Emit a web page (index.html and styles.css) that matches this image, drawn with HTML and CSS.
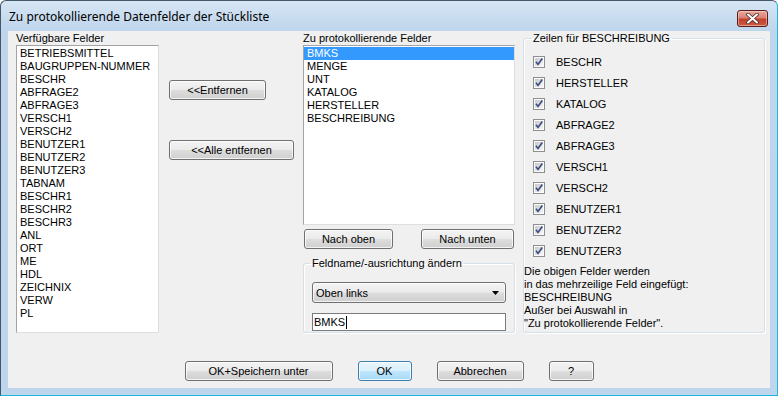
FILE: index.html
```html
<!DOCTYPE html>
<html lang="de">
<head>
  <meta charset="UTF-8" />
  <meta name="viewport" content="width=device-width, initial-scale=1.0"/>
  <title>Zu protokollierende Datenfelder der Stückliste</title>
  <link rel="stylesheet" href="styles.css">
</head>
<body>
  <svg class="defs" width="0" height="0" aria-hidden="true">
    <defs>
      <linearGradient id="chkFill" x1="0" y1="0" x2="1" y2="1">
        <stop offset="0" stop-color="#c9c9c9"/>
        <stop offset="1" stop-color="#f7f7f7"/>
      </linearGradient>
      <symbol id="chk" viewBox="0 0 12 12">
        <rect x="0.5" y="0.5" width="11" height="11" fill="#fbfbfb" stroke="#8e8f8f"/>
        <rect x="2" y="2" width="8" height="8" fill="url(#chkFill)"/>
        <path d="M3 5.8 L5 8.4 L9.3 2.6" fill="none" stroke="#3a4d83" stroke-width="1.7"/>
      </symbol>
    </defs>
  </svg>

  <div class="window">
    <div class="titlebar">
      <span class="title">Zu protokollierende Datenfelder der Stückliste</span>
      <button class="close" title="Schließen">
        <svg width="13" height="11" viewBox="0 0 13 11">
          <path d="M2 1.5 L11 9.5 M11 1.5 L2 9.5" stroke="#4a2a28" stroke-width="3.6" stroke-linecap="round"/>
          <path d="M2 1.5 L11 9.5 M11 1.5 L2 9.5" stroke="#fff" stroke-width="2" stroke-linecap="round"/>
        </svg>
      </button>
    </div>

    <div class="client">
      <div class="panes">
        <div class="col-left">
          <div class="label">Verfügbare Felder</div>
          <ul class="listbox list-avail">
            <li>BETRIEBSMITTEL</li>
            <li>BAUGRUPPEN-NUMMER</li>
            <li>BESCHR</li>
            <li>ABFRAGE2</li>
            <li>ABFRAGE3</li>
            <li>VERSCH1</li>
            <li>VERSCH2</li>
            <li>BENUTZER1</li>
            <li>BENUTZER2</li>
            <li>BENUTZER3</li>
            <li>TABNAM</li>
            <li>BESCHR1</li>
            <li>BESCHR2</li>
            <li>BESCHR3</li>
            <li>ANL</li>
            <li>ORT</li>
            <li>ME</li>
            <li>HDL</li>
            <li>ZEICHNIX</li>
            <li>VERW</li>
            <li>PL</li>
          </ul>
        </div>

        <div class="col-actions">
          <button class="btn btn-remove">&lt;&lt;Entfernen</button>
          <button class="btn btn-remove-all">&lt;&lt;Alle entfernen</button>
        </div>

        <div class="col-mid">
          <div class="label">Zu protokollierende Felder</div>
          <ul class="listbox list-log">
            <li class="selected">BMKS</li>
            <li>MENGE</li>
            <li>UNT</li>
            <li>KATALOG</li>
            <li>HERSTELLER</li>
            <li>BESCHREIBUNG</li>
          </ul>
          <div class="move-row">
            <button class="btn btn-up">Nach oben</button>
            <button class="btn btn-down">Nach unten</button>
          </div>
          <fieldset class="group group-field">
            <legend>Feldname/-ausrichtung ändern</legend>
            <div class="combo">
              <span>Oben links</span>
              <svg class="combo-arrow" width="7" height="4" viewBox="0 0 7 4"><path d="M0 0 H7 L3.5 4 Z" fill="#000"/></svg>
            </div>
            <div class="textbox">BMKS<span class="caret"></span></div>
          </fieldset>
        </div>

        <fieldset class="group group-lines">
          <legend>Zeilen für BESCHREIBUNG</legend>
          <label class="check-row"><svg class="chk"><use href="#chk"/></svg>BESCHR</label>
          <label class="check-row"><svg class="chk"><use href="#chk"/></svg>HERSTELLER</label>
          <label class="check-row"><svg class="chk"><use href="#chk"/></svg>KATALOG</label>
          <label class="check-row"><svg class="chk"><use href="#chk"/></svg>ABFRAGE2</label>
          <label class="check-row"><svg class="chk"><use href="#chk"/></svg>ABFRAGE3</label>
          <label class="check-row"><svg class="chk"><use href="#chk"/></svg>VERSCH1</label>
          <label class="check-row"><svg class="chk"><use href="#chk"/></svg>VERSCH2</label>
          <label class="check-row"><svg class="chk"><use href="#chk"/></svg>BENUTZER1</label>
          <label class="check-row"><svg class="chk"><use href="#chk"/></svg>BENUTZER2</label>
          <label class="check-row"><svg class="chk"><use href="#chk"/></svg>BENUTZER3</label>
          <p class="note">
            Die obigen Felder werden<br>
            in das mehrzeilige Feld eingefügt:<br>
            BESCHREIBUNG<br>
            Außer bei Auswahl in<br>
            "Zu protokollierende Felder".
          </p>
        </fieldset>
      </div>

      <div class="footer">
        <button class="btn btn-save">OK+Speichern unter</button>
        <button class="btn btn-default btn-ok">OK</button>
        <button class="btn btn-cancel">Abbrechen</button>
        <button class="btn btn-help">?</button>
      </div>
    </div>
  </div>
</body>
</html>
```

FILE: styles.css
```css
* {
  box-sizing: border-box;
}

body {
  margin: 0;
  font-family: "Liberation Sans", Arial, sans-serif;
  font-size: 11px;
  color: #000;
  background: #fff;
}

.defs {
  position: absolute;
  width: 0;
  height: 0;
}

/* window frame */
.window {
  width: 778px;
  height: 396px;
  display: flex;
  flex-direction: column;
  border: 1px solid #44566b;
  border-right-color: #1db7dc;
  border-bottom-color: #1db7dc;
  border-radius: 6px 6px 0 0;
  background: linear-gradient(#d6e5f4, #bed5ec 30px, #bdd5ed);
}

.titlebar {
  height: 30px;
  flex-shrink: 0;
  display: flex;
  justify-content: space-between;
  align-items: flex-start;
  padding: 0 9px 0 8px;
}

.title {
  font-family: "Noto Sans", sans-serif;
  font-size: 12px;
  line-height: 16px;
  margin-top: 8px;
}

.close {
  width: 31px;
  height: 17px;
  margin-top: 9px;
  padding: 0;
  display: flex;
  align-items: center;
  justify-content: center;
  border: 1px solid #5a1d1a;
  border-radius: 3px;
  background: linear-gradient(#e7a99c, #d98274 45%, #c0412d 55%, #cd5a45);
  box-shadow: inset 0 0 0 1px rgba(255, 220, 210, 0.5);
}

.client {
  margin: 0 7px;
  height: 357px;
  background: #f0f0f0;
  padding: 1px 0 0 8px;
}

.panes {
  display: flex;
  align-items: flex-start;
}

.label {
  line-height: 13px;
  height: 13px;
}

/* list boxes */
.listbox {
  list-style: none;
  margin: 0;
  padding: 1px 0 0;
  background: #fff;
  border: 1px solid;
  border-color: #a3a3a3 #dedede #dedede #a3a3a3;
  overflow: hidden;
}

.listbox li {
  line-height: 13px;
  padding-left: 3px;
  white-space: nowrap;
}

.listbox li.selected {
  background: #3399ff;
  color: #fff;
}

.col-left {
  width: 143px;
}

.list-avail {
  height: 288px;
}

.col-actions {
  width: 126px;
  margin-left: 10px;
  padding-top: 48px;
  display: flex;
  flex-direction: column;
  align-items: flex-start;
  gap: 40px;
}

.col-mid {
  width: 212px;
  margin-left: 8px;
}

.list-log {
  height: 180px;
}

.move-row {
  display: flex;
  justify-content: space-between;
  padding: 0 1px 0 1px;
  margin: 4px 0 8px;
}

/* buttons */
.btn {
  height: 20px;
  padding: 0;
  font: inherit;
  color: #000;
  border: 1px solid #707070;
  border-radius: 3px;
  background: linear-gradient(#f3f3f3, #ebebeb 48%, #dddddd 52%, #cfcfcf);
  box-shadow: inset 0 0 0 1px rgba(255, 255, 255, 0.75);
}

.btn-default {
  border-color: #3c7fb1;
  background: linear-gradient(#e9f6fd, #d9f0fc 48%, #bee6fd 52%, #a7d9f5);
}

.btn-remove { width: 97px; }
.btn-remove-all { width: 125px; }
.btn-up { width: 89px; }
.btn-down { width: 93px; }
.btn-save { width: 148px; }
.btn-ok { width: 54px; }
.btn-cancel { width: 87px; }
.btn-help { width: 45px; }

/* group boxes */
.group {
  margin: 0;
  padding: 0;
  border: 1px solid #d5dfe5;
  border-radius: 3px;
  box-shadow: inset 1px 1px 0 #fff, 1px 1px 0 #fff;
}

.group legend {
  padding: 0 2px;
  line-height: 13px;
}

.group-field {
  height: 76px;
  padding: 12px 8px 0 8px;
}

.group-field legend {
  margin-left: -2px;
}

.combo {
  height: 21px;
  display: flex;
  align-items: center;
  justify-content: space-between;
  padding: 0 6px 0 3px;
  border: 1px solid #707070;
  border-radius: 3px;
  background: linear-gradient(#f3f3f3, #ebebeb 48%, #dddddd 52%, #cfcfcf);
  box-shadow: inset 0 0 0 1px rgba(255, 255, 255, 0.75);
  margin-bottom: 10px;
}

.textbox {
  height: 18px;
  line-height: 16px;
  padding-left: 1px;
  background: #fff;
  border: 1px solid #7a7a7a;
  display: flex;
  align-items: center;
}

.caret {
  width: 1px;
  height: 13px;
  background: #000;
  margin-left: 1px;
}

.group-lines {
  width: 242px;
  height: 301px;
  margin-left: 8px;
  padding: 7px 0 0;
}

.group-lines legend {
  margin-left: 7px;
}

.check-row {
  height: 21px;
  display: flex;
  align-items: center;
  padding-left: 9px;
  line-height: 13px;
}

.chk {
  width: 12px;
  height: 12px;
  margin-right: 11px;
  margin-top: -2px;
}

.note {
  margin: 3px 0 0;
  line-height: 13px;
}

.footer {
  display: flex;
  justify-content: center;
  gap: 25px;
  margin: 28px 0 0 -8px;
}
```
